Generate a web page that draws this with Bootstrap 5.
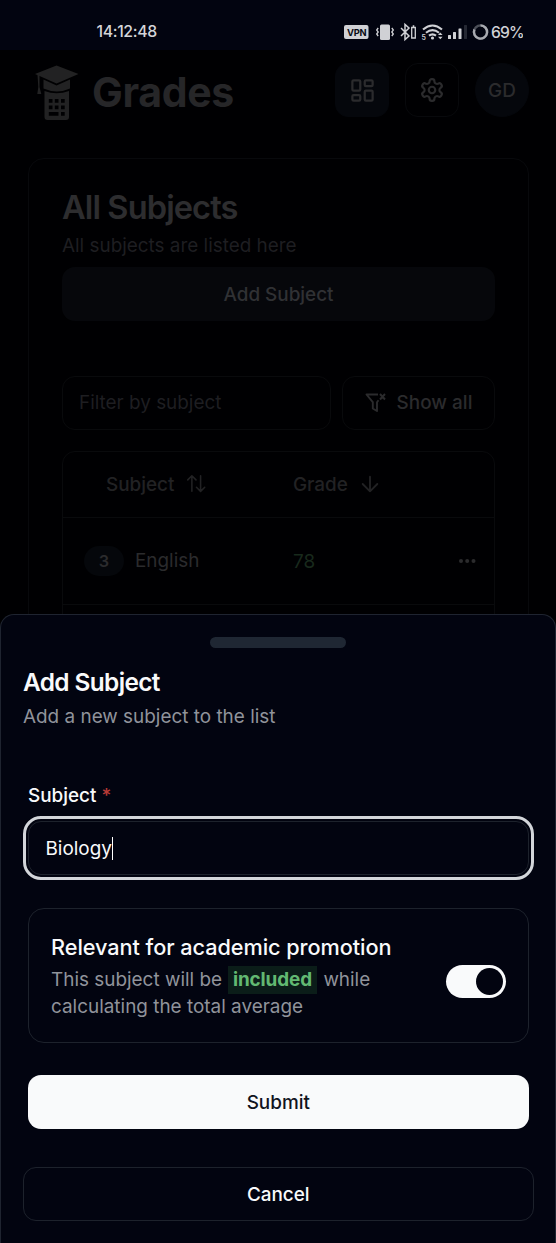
<!DOCTYPE html>
<html lang="en">
<head>
<meta charset="utf-8">
<meta name="viewport" content="width=device-width, initial-scale=1">
<title>Grades</title>
<link rel="stylesheet" href="https://cdn.jsdelivr.net/npm/bootstrap@5.3.0/dist/css/bootstrap.min.css">
<style>
  body { background:#000002; font-family:Inter,"Liberation Sans",sans-serif; font-size:18.9px; line-height:27px; color:#f9fafb; height:1243px; overflow:hidden; }
  svg { display:block; flex:none; }
  .lucide { fill:none; stroke:currentColor; stroke-width:2; stroke-linecap:round; stroke-linejoin:round; }
  .medium { font-weight:500; }
  .status-bar { height:50px; background:#020410; color:#d4d5d9; padding:14px 33px 0 96.5px; font-size:15.8px; font-weight:500; }
  .status-bar .clock { line-height:36px; letter-spacing:-.35px; }
  .page-dim { height:564px; overflow:hidden; color:#2b2b2d; }
  .brand-row { height:107.5px; padding:13px 27px 0 34px; }
  .brand-logo { margin-top:1px; }
  .brand-name { font-size:41px; line-height:48px; font-weight:700; letter-spacing:-.35px; color:#262628; margin:5px 0 0 13px; }
  .sq { width:54px; height:54px; border-radius:13px; border:1px solid #08090c; display:flex; align-items:center; justify-content:center; }
  .sq-fill { background:#05070c; border-color:#05070c; }
  .subjects-card { --bs-card-bg:transparent; --bs-card-color:#2b2b2d; margin:0 27px 0 28px; height:600px; border:1px solid #08090c; border-radius:16px; padding:30.5px 33px 0; }
  .card-h { font-size:32.6px; line-height:36px; font-weight:600; letter-spacing:-.9px; color:#2d2d2f; margin:0; }
  .card-sub { margin-top:7px; }
  .dim-muted { color:#1e1e21; }
  .btn-tall { height:54px; border-radius:13px; font-weight:500; display:flex; align-items:center; justify-content:center; }
  .add-dim { background:#06070b; color:#303134; margin-top:8px; }
  .filters { margin-top:54.5px; gap:11px; }
  .outline-dim { border:1px solid #090a0c; border-radius:13px; height:54px; display:flex; align-items:center; }
  .show-all { width:153px; justify-content:center; font-weight:500; letter-spacing:.05px; }
  .grid-box { border:1px solid #090a0c; border-radius:13px 13px 0 0; height:200px; margin-top:21.5px; }
  .grid-line { border-bottom:1px solid #090a0c; display:flex; align-items:center; height:87px; }
  .grid-head { height:66px; color:#222224; font-weight:500; padding-bottom:1px; }
  .grid-head .lucide { margin-left:11px; }
  .col-a { width:230px; display:flex; align-items:center; padding-left:21px; }
  .grid-head .col-a { padding-left:43px; }
  .english { margin:-2px 0 0 11px; }
  .pill-n { width:40px; height:30px; border-radius:15px; background:#05070b; font-size:16.3px; font-weight:600; display:flex; align-items:center; justify-content:center; }
  .good { color:#18291c; }
  .more { margin:0 17px 0 auto; }
  .drawer { height:629px; background:#020410; border:1px solid #1f2430; border-bottom:0; border-radius:14px 14px 0 0; padding:22px 21.5px 0 22px; }
  .grip { width:136px; height:11px; border-radius:6px; background:#1f2733; }
  .drawer h2 { font-size:24.4px; line-height:28px; font-weight:600; letter-spacing:-.62px; margin:20px 0 7px; }
  .soft { color:#90939b; letter-spacing:.01px; }
  .field-label { margin:52px 0 12px 5px; font-weight:500; }
  .required { color:#b83a36; }
  .field { height:54px; margin:0 5px; border:1px solid #1d222c; border-radius:13px; outline:3px solid #d3d6da; outline-offset:2.5px; padding:1px 16px 0 16.5px; display:flex; align-items:center; }
  .caret { width:1.5px; height:23px; background:#fff; }
  .option { height:135px; margin:32.5px 5px 0; border:1px solid #1d222c; border-radius:16px; padding:3px 22px 0; }
  .option-title { font-size:21.7px; line-height:27px; font-weight:500; letter-spacing:-.06px; margin-bottom:5px; }
  .included { background:#0b1d19; color:#62b972; font-weight:700; padding:2px 5px 3px; margin:0 1px 0 .5px; letter-spacing:-.1px; }
  .toggle { width:60px; height:33px; border-radius:17px; background:#f9fafb; padding:3px; margin-top:9px; }
  .knob { width:27px; height:27px; border-radius:50%; background:#020410; }
  .submit { background:#f9fafb; color:#11141e; margin:32.5px 5px 0; }
  .cancel { border:1px solid #1d222c; color:#f9fafb; margin-top:38px; }
</style>
</head>
<body>
<header class="status-bar d-flex justify-content-between align-items-start">
  <span class="clock">14:12:48</span>
  <svg width="180" height="36" viewBox="343 14 180 36" fill="#d0d1d5">
    <rect x="344" y="25" width="24.5" height="14" rx="2"/>
    <text x="347" y="35.600" font-size="9.300" font-weight="700" letter-spacing="-.2" fill="#080a14">VPN</text>
    <rect x="380" y="24.500" width="10" height="15.500" rx="1.500"/>
    <path d="M378.200 28l-1.500 2 1.500 2-1.500 2 1.500 2M391.800 28l1.500 2-1.500 2 1.500 2-1.500 2" fill="none" stroke="#d0d1d5" stroke-width="1.300"/>
    <path d="M401 28l8 8-4 3.500v-15l4 3.500-8 8" fill="none" stroke="#d0d1d5" stroke-width="1.500"/>
    <path d="M411.700 27.500h3.600v10.500h-3.600zM412.700 26h1.600" fill="none" stroke="#d0d1d5" stroke-width="1.300"/>
    <path d="M423 29.500q9.500-8 19 0M426 32.700q6.500-5.200 13 0M429 35.700q3.500-2.700 7 0" fill="none" stroke="#d0d1d5" stroke-width="2.100"/>
    <circle cx="432.500" cy="38" r="1.600"/>
    <text x="421.500" y="39.500" font-size="7" font-weight="600">5</text>
    <path d="M438 35l2.300-2.500 2.300 2.500zM438 36.800l2.300 2.500 2.300-2.500z"/>
    <rect x="448" y="35" width="3" height="4" rx=".5"/><rect x="453" y="32" width="3" height="7" rx=".5"/><rect x="458.500" y="28.500" width="3" height="10.500" rx=".5"/><rect x="464" y="25" width="3" height="14" rx=".5" fill="#252833"/>
    <circle cx="480.500" cy="32" r="6.600" fill="none" stroke="#4b4e57" stroke-width="2.400"/>
    <path d="M480.500 25.400a6.600 6.600 0 1 1-6.100 4.100" fill="none" stroke="#a8aab0" stroke-width="2.400"/>
    <text x="491" y="38" font-size="15.700" font-weight="500" letter-spacing="-.9">69%</text>
  </svg>
</header>

<main class="page-dim">
  <div class="brand-row d-flex align-items-start">
    <svg class="brand-logo" width="45" height="57" viewBox="34 64 45 57" fill="#222223">
      <path d="M56.500 65.500L78.500 74 56.500 83.500 35 74z"/>
      <path d="M43.500 79.500l13 6 13.500-6v9q-13 6-26.500 0z"/>
      <path d="M37.500 75h2v12l1.800 7h-4l1-7z"/>
      <path fill-rule="evenodd" d="M44.500 91q12 4.500 24.500 0v26q0 3-3 3h-18.500q-3 0-3-3zM48.800 99h3.700v3.700h-3.700zM54.800 99h3.700v3.700h-3.700zM61 99h3.700v3.700H61zM48.800 105.500h3.700v3.700h-3.700zM54.800 105.500h3.700v3.700h-3.700zM61 105.500h3.700v3.700H61zM48.800 112h9.700v3.700h-9.700zM61 112h3.700v3.700H61z"/>
    </svg>
    <div class="brand-name">Grades</div>
    <div class="d-flex gap-3 ms-auto">
      <div class="sq sq-fill"><svg class="lucide" width="27" height="27" viewBox="0 0 24 24"><rect x="3" y="3" width="7" height="9" rx="1"/><rect x="14" y="3" width="7" height="5" rx="1"/><rect x="14" y="12" width="7" height="9" rx="1"/><rect x="3" y="16" width="7" height="5" rx="1"/></svg></div>
      <div class="sq"><svg class="lucide" width="26" height="26" viewBox="0 0 24 24"><path d="M12.220 2h-.44a2 2 0 0 0-2 2v.18a2 2 0 0 1-1 1.730l-.43.25a2 2 0 0 1-2 0l-.15-.08a2 2 0 0 0-2.730.73l-.22.38a2 2 0 0 0 .73 2.730l.15.1a2 2 0 0 1 1 1.720v.51a2 2 0 0 1-1 1.740l-.15.09a2 2 0 0 0-.73 2.730l.22.38a2 2 0 0 0 2.730.73l.15-.08a2 2 0 0 1 2 0l.43.25a2 2 0 0 1 1 1.730V20a2 2 0 0 0 2 2h.44a2 2 0 0 0 2-2v-.18a2 2 0 0 1 1-1.730l.43-.25a2 2 0 0 1 2 0l.15.08a2 2 0 0 0 2.730-.73l.22-.39a2 2 0 0 0-.73-2.730l-.15-.08a2 2 0 0 1-1-1.740v-.5a2 2 0 0 1 1-1.740l.15-.09a2 2 0 0 0 .73-2.730l-.22-.38a2 2 0 0 0-2.730-.73l-.15.08a2 2 0 0 1-2 0l-.43-.25a2 2 0 0 1-1-1.730V4a2 2 0 0 0-2-2z"/><circle cx="12" cy="12" r="3"/></svg></div>
      <div class="sq sq-fill rounded-circle medium">GD</div>
    </div>
  </div>

  <section class="card subjects-card">
    <h1 class="card-h">All Subjects</h1>
    <div class="dim-muted card-sub">All subjects are listed here</div>
    <div class="btn-tall add-dim">Add Subject</div>
    <div class="filters d-flex">
      <div class="outline-dim dim-muted flex-grow-1 px-3">Filter by subject</div>
      <div class="outline-dim show-all">
        <svg class="me-2" width="24" height="24" viewBox="0 0 24 24" fill="none" stroke="currentColor" stroke-width="1.900" stroke-linejoin="round"><path d="M14 3.500H2.500l6.300 7.700v6.300l4.200 2.500v-8.800l1.500-2M16 3l5 5.500M21 3l-5 5.500"/></svg>
        <span>Show all</span>
      </div>
    </div>
    <div class="grid-box">
      <div class="grid-line grid-head">
        <div class="col-a">Subject
          <svg class="lucide" width="22" height="22" viewBox="0 0 24 24"><path d="M3 7.500L7.500 3 12 7.500M7.500 3v17M21.500 15.500L17 20l-4.500-4.500M17 20V3" stroke-width="1.700"/></svg>
        </div>
        <div class="d-flex align-items-center">Grade
          <svg class="lucide" width="22" height="22" viewBox="0 0 24 24"><path d="M12 4v16M4 12l8 8 8-8"/></svg>
        </div>
      </div>
      <div class="grid-line">
        <div class="col-a"><div class="pill-n">3</div><span class="english">English</span></div>
        <div class="good">78</div>
        <svg class="more" width="20" height="6" viewBox="0 0 20 6" fill="currentColor"><circle cx="4" cy="3" r="2"/><circle cx="10.200" cy="3" r="2"/><circle cx="16.500" cy="3" r="2"/></svg>
      </div>
    </div>
  </section>
</main>

<section class="drawer">
  <div class="grip mx-auto"></div>
  <h2>Add Subject</h2>
  <div class="soft">Add a new subject to the list</div>
  <div class="field-label">Subject <span class="required">*</span></div>
  <div class="field"><span>Biology</span><span class="caret"></span></div>
  <div class="option d-flex align-items-center justify-content-between">
    <div>
      <div class="option-title">Relevant for academic promotion</div>
      <div class="soft">This subject will be <span class="included">included</span> while<br>calculating the total average</div>
    </div>
    <div class="toggle d-flex justify-content-end"><div class="knob"></div></div>
  </div>
  <div class="btn-tall submit">Submit</div>
  <div class="btn-tall cancel">Cancel</div>
</section>
<script src="https://cdn.jsdelivr.net/npm/bootstrap@5.3.0/dist/js/bootstrap.bundle.min.js"></script>
</body>
</html>
